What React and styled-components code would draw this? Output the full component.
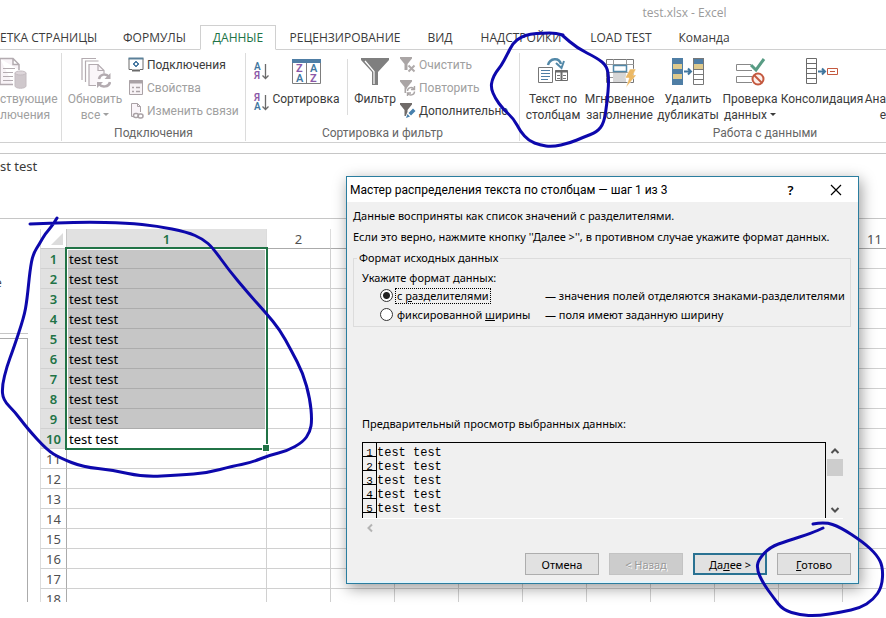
import React, { useState } from 'react';
import styled, { createGlobalStyle, css } from 'styled-components';

const tabs = [
  { name: 'ЕТКА СТРАНИЦЫ', width: 109, first: true },
  { name: 'ФОРМУЛЫ', width: 91 },
  { name: 'ДАННЫЕ', width: 76, active: true },
  { name: 'РЕЦЕНЗИРОВАНИЕ', width: 138 },
  { name: 'ВИД', width: 52 },
  { name: 'НАДСТРОЙКИ', width: 110 },
  { name: 'LOAD TEST', width: 90 },
  { name: 'Команда', width: 76 },
];

// Headings of the columns after the first, blank where the wizard covers them
const columns = ['2', '', '', '', '', '', '', '', '', '11'];
const rows = Array.from({ length: 18 }, (_, i) => i + 1);
const FILLED = 10;

// Freehand strokes drawn over the window
const strokes = [
  [[563, 35], [556, 33], [543, 33], [530, 34], [521, 37], [513, 43], [507, 55], [501, 66], [496, 72], [492, 80], [491, 88], [495, 98], [503, 109], [514, 119], [520, 131], [529, 141], [540, 145], [552, 147], [570, 143], [584, 137], [597, 132], [604, 123], [607, 103], [609, 80], [607, 66], [597, 58], [577, 48], [562, 35]],
  [[57, 218], [53, 225], [45, 234], [40, 243], [33, 254], [30, 270], [27, 300], [24, 317], [13, 350], [7, 366], [2, 386], [3, 400], [15, 412], [27, 428], [47, 450], [60, 458], [83, 467], [113, 470], [143, 477], [180, 475], [207, 473], [233, 466], [250, 463], [270, 455], [287, 451], [303, 442], [310, 432], [312, 420], [310, 399], [303, 373], [291, 350], [280, 330], [266, 313], [248, 293], [228, 269], [213, 248], [203, 239], [187, 232], [157, 226], [127, 223], [83, 222], [30, 224]],
  [[813, 524], [825, 522], [840, 527], [863, 542], [877, 555], [883, 567], [882, 587], [873, 600], [860, 608], [842, 612], [817, 616], [800, 615], [783, 610], [773, 597], [763, 583], [757, 570], [758, 560], [770, 547], [787, 541], [812, 533], [823, 528]],
];

const toPath = (points) => {
  let d = `M${points[0]}`;
  for (let i = 1; i < points.length - 1; i++) {
    const [x, y] = points[i];
    const [nx, ny] = points[i + 1];
    d += ` Q${x},${y} ${(x + nx) / 2},${(y + ny) / 2}`;
  }
  return `${d} L${points[points.length - 1]}`;
};

/* Icons */

function ExistingIcon() {
  return (
    <svg width='32' height='32' viewBox='0 0 32 32' fill='none' stroke='#b3abb0'>
      <path d='M5 1.5h13l6 6V13M5 1.5v26h13M18 1.5v6h6' fill='#f8f3f7' strokeWidth='1.5' />
      <path d='M8 11.5h12M8 15.5h10M8 19.5h10M8 23.5h10' />
      <path d='M20 16v13c0 3 11 3 11 0V16' fill='#cfc8cc' stroke='#c4bcc1' />
      <ellipse cx='25.5' cy='16' rx='5.5' ry='2' fill='#ddd6da' stroke='#c4bcc1' />
    </svg>
  );
}

function RefreshIcon() {
  return (
    <svg width='32' height='32' viewBox='0 0 32 32' fill='none' stroke='#b3abb0' strokeWidth='1.2'>
      <path d='M3 23V1.500h14M6.500 25V4h13' />
      <path d='M17 28.500h-7v-21h9l6 6v3' fill='#faf6f9' />
      <path d='M19 7.500v6h6' />
      <path d='M20 22c1-5 7-6 10-2M31 25c-1 5-8 6-11 2' strokeWidth='2.5' />
      <path d='M31.500 16v6h-6zM18 31v-6h6z' fill='#b3abb0' stroke='none' />
    </svg>
  );
}

function MonitorIcon() {
  return (
    <svg width='16' height='16' viewBox='0 0 16 16' fill='none' stroke='#6b6b6b'>
      <path d='M4 12.500H1v-11h14v11h-3' />
      <path d='M.500 1.500h15' stroke='#5b8099' strokeWidth='2' />
      <path d='M4 13.500h8' strokeWidth='2' />
      <path d='M8 4l3 3-3 3-3-3z' fill='#4f7ea5' stroke='#4f7ea5' />
      <path d='M7 6h2v2H7z' fill='#fff' stroke='none' />
    </svg>
  );
}

function PropsIcon() {
  return (
    <svg width='16' height='16' viewBox='0 0 16 16' fill='none' stroke='#aaa2a6'>
      <path d='M1.500 .500h13v14h-13z' fill='#f8f3f6' />
      <path d='M1 2h14' strokeWidth='3' />
      <path d='M4 7.500h2M4 11.500h2M8 7.500h4M8 11.500h4' strokeWidth='1.500' />
    </svg>
  );
}

function LinksIcon() {
  return (
    <svg width='16' height='16' viewBox='0 0 16 16' fill='none' stroke='#aaa2a6'>
      <path d='M5 13.500H3.500v-13h6l3 3V9' fill='#faf5f9' />
      <path d='M9.500.500v3h3' />
      <rect x='5.500' y='10.500' width='5' height='4' rx='2' strokeWidth='1.500' />
      <rect x='10' y='11' width='5' height='4' rx='2' strokeWidth='1.500' />
    </svg>
  );
}

function OrderIcon({ desc }) {
  return (
    <svg width='18' height='20' viewBox='0 0 18 20'>
      <IconText x='1' y='8' fill={desc ? '#8b58a8' : '#41779f'}>{desc ? 'Я' : 'А'}</IconText>
      <IconText x='1' y='17' fill={desc ? '#41779f' : '#8b58a8'}>{desc ? 'А' : 'Я'}</IconText>
      <path d='M12.500 2v14.500M9.500 13.500l3 3 3-3' fill='none' stroke='#6b6b6b' strokeWidth='1.300' />
    </svg>
  );
}

function SortIcon() {
  return (
    <svg width='32' height='32' viewBox='0 0 32 32' fill='none'>
      <path d='M2.500 3.500h28v23h-28zM16.500 5v21' fill='#fff' stroke='#7d7d7d' />
      <path d='M2 2h29v4H2z' fill='#4f7ea5' />
      <IconText x='6' y='15' $big fill='#8b58a8'>Z</IconText>
      <IconText x='6' y='25' $big fill='#41779f'>A</IconText>
      <IconText x='20' y='15' $big fill='#41779f'>A</IconText>
      <IconText x='20' y='25' $big fill='#8b58a8'>Z</IconText>
    </svg>
  );
}

function FilterIcon() {
  return (
    <svg width='32' height='32' viewBox='0 0 32 32'>
      <path d='M2 1h28v2L19 15v13h-6V15L2 3z' fill='#7f7f7f' />
      <path d='M6 4l9 10.500V27' fill='none' stroke='#fff' strokeWidth='1.200' />
    </svg>
  );
}

function SmallFilterIcon({ kind }) {
  return (
    <svg width='16' height='16' viewBox='0 0 16 16' fill='none'>
      <path d='M0 0h12v1.500L7.500 7v6h-3V7L0 1.500z' fill={kind === 'edit' ? '#6f6a68' : '#aaa5a5'} />
      {kind === 'clear' && <path d='M8.500 8.500l6 6M14.500 8.500l-6 6' stroke='#b0abab' strokeWidth='2' />}
      {kind === 'again' && (
        <>
          <circle cx='11' cy='11' r='5' fill='#fff' />
          <path d='M7.500 11c0-4 5-4.500 6.500-2M14.500 11.500c0 4-5 4.500-6.500 2M14.500 6v3.500H11M7.500 16v-3H11' stroke='#aaa5a5' strokeWidth='1.400' />
        </>
      )}
      {kind === 'edit' && (
        <>
          <path d='M5 15l2-5 6-6 3 3-6 6z' fill='#fff' />
          <path d='M6 15l1.500-4 2.500 2.500zM8.500 10l4.500-4.500 2.500 2.500-4.500 4.500z' fill='#4780ad' />
        </>
      )}
    </svg>
  );
}

function ColumnsIcon() {
  return (
    <svg width='32' height='32' viewBox='0 0 32 32' fill='none'>
      <path d='M1.500 10.500h14v15h-14z' fill='#fff' stroke='#777' />
      <path d='M4 13.500h9M4 16.500h9M4 19.500h9M4 22.500h7' stroke='#4f7ea5' />
      <path d='M18.500 13.500h12v10h-12z' fill='#fff' stroke='#6b6b6b' />
      <path d='M18 14.500h13M24.500 14v9' stroke='#6b6b6b' strokeWidth='2' />
      <path d='M20 18.500h3M20 21.500h3M26 18.500h3M26 21.500h3' stroke='#777' />
      <path d='M11 8c2-7 11-8 13-1' stroke='#5288a8' strokeWidth='2.5' />
      <path d='M19 6l5.500 5L27 4' stroke='#5288a8' strokeWidth='2' />
    </svg>
  );
}

function FlashIcon() {
  return (
    <svg width='32' height='32' viewBox='0 0 32 32' fill='none'>
      <path d='M2.500 2.500h27v23h-27z' fill='#fff' stroke='#777' />
      <path d='M9 16h13v9H9z' fill='#d6d6d6' />
      <path d='M2 7.500h28M2 15.500h28M2 20.500h7M9.500 2v6M22.500 2v6' stroke='#999' />
      <path d='M9.500 8.500h13v6h-13z' stroke='#5288a8' strokeWidth='1.500' fill='#fff' />
      <path d='M26 12h6l-3 6h3.500L22 30.500l3-9.500h-4z' fill='#ebb864' stroke='#fff' strokeWidth='.5' />
    </svg>
  );
}

function DuplicatesIcon() {
  return (
    <svg width='34' height='32' viewBox='0 0 34 32' fill='none'>
      <path d='M1 1h11v27H1zM22 1h11v6H22z' fill='#4f7ea5' />
      <path d='M2 7h9v5H2zM2 17h9v5H2zM22 7h11v5H22z' fill='#dfca8d' />
      <path d='M22.500 1.500h10v26h-10zM22 12.500h11M22 17.500h11M22 22.500h11' stroke='#777' />
      <path d='M13 14.500h6M17 11.500l3 3-3 3' stroke='#41779f' strokeWidth='2' />
    </svg>
  );
}

function ValidationIcon() {
  return (
    <svg width='32' height='32' viewBox='0 0 32 32' fill='none'>
      <path d='M17 7.500H2.500v6H18M18 19.500H2.500v6H18' stroke='#888' />
      <path d='M17 8l5 5 8-11' stroke='#589c84' strokeWidth='3' />
      <circle cx='24' cy='22' r='5.500' stroke='#c4593f' strokeWidth='2' fill='#fdf0ec' />
      <path d='M20 18l8 8' stroke='#c4593f' strokeWidth='2' />
    </svg>
  );
}

function ConsolidateIcon() {
  return (
    <svg width='34' height='32' viewBox='0 0 34 32' fill='none'>
      <path d='M1.500 1.500h10v25h-10zM1 6.500h11M1 11.500h11M1 16.500h11M1 21.500h11' stroke='#6b6b6b' />
      <path d='M13 14.500h6M17 11.500l3 3-3 3' stroke='#41779f' strokeWidth='2' />
      <path d='M22.500 11.500h10v6h-10zM25 14.500h5' stroke='#c4593f' />
    </svg>
  );
}

function Big({ icon, lines, width, muted, arrow }) {
  return (
    <BigButton type='button' $width={width} $muted={muted}>
      <BigIcon>{icon}</BigIcon>
      {lines.map((line, i) => (
        <span key={line}>
          {line}
          {arrow && i === lines.length - 1 && <Caret />}
        </span>
      ))}
    </BigButton>
  );
}

function Ribbon() {
  return (
    <RibbonBar>
      <Group $width={62}>
        <Items>
          <EdgeButton type='button'>
            <EdgeIcon><ExistingIcon /></EdgeIcon>
            <span>ствующие</span>
            <span>лючения</span>
          </EdgeButton>
        </Items>
      </Group>
      <Group $width={184}>
        <Items $pad={4}>
          <Big icon={<RefreshIcon />} lines={['Обновить', 'все']} width={58} muted arrow />
          <SmallList>
            <SmallButton type='button'><MonitorIcon />Подключения</SmallButton>
            <SmallButton type='button' $muted><PropsIcon />Свойства</SmallButton>
            <SmallButton type='button' $muted><LinksIcon />Изменить связи</SmallButton>
          </SmallList>
        </Items>
        <GroupLabel>Подключения</GroupLabel>
      </Group>
      <Group $width={274}>
        <Items $pad={7}>
          <OrderList>
            <OrderButton type='button' aria-label='По возрастанию'><OrderIcon /></OrderButton>
            <OrderButton type='button' aria-label='По убыванию'><OrderIcon desc /></OrderButton>
          </OrderList>
          <Big icon={<SortIcon />} lines={['Сортировка']} width={70} />
          <Divider />
          <Big icon={<FilterIcon />} lines={['Фильтр']} width={42} />
          <SmallList>
            <SmallButton type='button' $muted><SmallFilterIcon kind='clear' />Очистить</SmallButton>
            <SmallButton type='button' $muted><SmallFilterIcon kind='again' />Повторить</SmallButton>
            <SmallButton type='button'><SmallFilterIcon kind='edit' />Дополнительно</SmallButton>
          </SmallList>
        </Items>
        <GroupLabel>Сортировка и фильтр</GroupLabel>
      </Group>
      <Group $width={491}>
        <Items $pad={3}>
          <Big icon={<ColumnsIcon />} lines={['Текст по', 'столбцам']} width={60} />
          <Big icon={<FlashIcon />} lines={['Мгновенное', 'заполнение']} width={73} />
          <Big icon={<DuplicatesIcon />} lines={['Удалить', 'дубликаты']} width={64} />
          <Big icon={<ValidationIcon />} lines={['Проверка', 'данных']} width={60} arrow />
          <Big icon={<ConsolidateIcon />} lines={['Консолидация']} width={84} />
          <CutButton type='button'>
            <span>Ана</span>
            <span>е</span>
          </CutButton>
        </Items>
        <GroupLabel>Работа с данными</GroupLabel>
      </Group>
    </RibbonBar>
  );
}

function Sheet() {
  return (
    <SheetArea>
      <Grid>
        <colgroup>
          <FirstCol />
          <WideCol />
          {columns.map((c, i) => <Col key={i} />)}
        </colgroup>
        <thead>
          <tr>
            <Corner aria-label='Выделить все'>
              <svg width='12' height='12' viewBox='0 0 12 12'><path d='M12 0v12H0z' fill='#dcdcdc' /></svg>
            </Corner>
            <ColHead $selected>1</ColHead>
            {columns.map((c, i) => <ColHead key={i}>{c}</ColHead>)}
          </tr>
        </thead>
        <tbody>
          {rows.map((r) => (
            <tr key={r}>
              <RowHead $selected={r <= FILLED}>{r}</RowHead>
              <Cell $shaded={r < FILLED}>{r <= FILLED ? 'test test' : ''}</Cell>
              {columns.map((c, i) => <Cell key={i} />)}
            </tr>
          ))}
        </tbody>
      </Grid>
      <Selection><Handle /></Selection>
    </SheetArea>
  );
}

function Wizard() {
  const [format, setFormat] = useState('delimited');

  return (
    <Dialog role='dialog' aria-labelledby='wizard-title'>
      <DialogBar>
        <DialogTitle id='wizard-title'>Мастер распределения текста по столбцам — шаг 1 из 3</DialogTitle>
        <BarButton type='button'>?</BarButton>
        <BarButton type='button' aria-label='Закрыть'>
          <svg width='12' height='12' viewBox='0 0 12 12'><path d='M1 1l10 10M11 1L1 11' stroke='#000' strokeWidth='1.200' /></svg>
        </BarButton>
      </DialogBar>
      <DialogBody>
        <Line>Данные восприняты как список значений с разделителями.</Line>
        <Line>Если это верно, нажмите кнопку ''Далее &gt;'', в противном случае укажите формат данных.</Line>
        <Fieldset>
          <legend>Формат исходных данных</legend>
          <Prompt>Укажите формат данных:</Prompt>
          <Option>
            <Radio type='radio' id='delimited' name='format' checked={format === 'delimited'} onChange={() => setFormat('delimited')} />
            <OptionLabel htmlFor='delimited' $focused><span>с <u>р</u>азделителями</span></OptionLabel>
            <span>— значения полей отделяются знаками-разделителями</span>
          </Option>
          <Option>
            <Radio type='radio' id='fixed' name='format' checked={format === 'fixed'} onChange={() => setFormat('fixed')} />
            <OptionLabel htmlFor='fixed'><span>фиксированной <u>ш</u>ирины</span></OptionLabel>
            <span>— поля имеют заданную ширину</span>
          </Option>
        </Fieldset>
        <PreviewTitle>Предварительный просмотр выбранных данных:</PreviewTitle>
        <Preview>
          <PreviewBox>
            {[1, 2, 3, 4, 5].map((n) => (
              <PreviewRow key={n}>
                <PreviewNumber>{n}</PreviewNumber>
                test test
              </PreviewRow>
            ))}
            <PreviewEnd />
          </PreviewBox>
          <Scrollbar>
            <ScrollButton type='button' aria-label='Вверх'>
              <svg width='10' height='8' viewBox='0 0 10 8'><path d='M1.500 6L5 2.500 8.500 6' fill='none' stroke='#505050' strokeWidth='2' /></svg>
            </ScrollButton>
            <Thumb />
            <ScrollButton type='button' aria-label='Вниз'>
              <svg width='10' height='8' viewBox='0 0 10 8'><path d='M1.500 2L5 5.500 8.500 2' fill='none' stroke='#505050' strokeWidth='2' /></svg>
            </ScrollButton>
          </Scrollbar>
        </Preview>
        <SideScroll>
          <ScrollButton type='button' aria-label='Влево' disabled>
            <svg width='8' height='10' viewBox='0 0 8 10'><path d='M6 1.500L2.500 5 6 8.500' fill='none' stroke='#b4b4b4' strokeWidth='2' /></svg>
          </ScrollButton>
        </SideScroll>
        <Actions>
          <Action type='button'>Отмена</Action>
          <Action type='button' disabled>&lt; Назад</Action>
          <Action type='button' $primary><span>Да<u>л</u>ее &gt;</span></Action>
          <Action type='button'><span><u>Г</u>отово</span></Action>
        </Actions>
      </DialogBody>
    </Dialog>
  );
}

function App() {
  return (
    <Window>
      <GlobalStyle />
      <TitleBar>test.xlsx - Excel</TitleBar>
      <Tabs>
        {tabs.map((tab) => (
          <Tab key={tab.name} href='#' $width={tab.width} $active={tab.active} $first={tab.first}>
            {tab.name}
          </Tab>
        ))}
      </Tabs>
      <Ribbon />
      <FormulaBar>st test</FormulaBar>
      <Workspace>
        <SidePane>
          <PaneTop>е</PaneTop>
          <PaneBox />
        </SidePane>
        <Sheet />
      </Workspace>
      <Wizard />
      <Ink viewBox='0 0 886 618' aria-hidden='true'>
        {strokes.map((points, i) => <path key={i} d={toPath(points)} />)}
      </Ink>
    </Window>
  );
}

export default App;

// Styled Components
const GlobalStyle = createGlobalStyle`
  * {
    box-sizing: border-box;
  }
  body {
    margin: 0;
    background: #fff;
    font-family: 'Open Sans', 'Noto Sans', sans-serif;
    font-size: 12px;
    color: #3b3b3b;
    overflow: hidden;
  }
  button {
    font: inherit;
    color: inherit;
    background: none;
    border: 0;
    padding: 0;
  }
`;

const Window = styled.div`
  position: relative;
  min-height: 100vh;
  overflow: hidden;
`;

const TitleBar = styled.header`
  height: 25px;
  padding-left: 483px;
  line-height: 26px;
  text-align: center;
  color: #9b9b9b;
`;

const Tabs = styled.nav`
  display: flex;
  height: 25px;
  border-bottom: 1px solid #d0d0d0;
`;

const Tab = styled.a`
  flex: none;
  width: ${(p) => p.$width}px;
  height: 25px;
  line-height: 26px;
  text-align: ${(p) => (p.$first ? 'left' : 'center')};
  white-space: nowrap;
  text-decoration: none;
  color: #3b3b3b;
  ${(p) => p.$active && css`
    line-height: 24px;
    border: 1px solid #d0d0d0;
    border-bottom-color: #fff;
    color: #217346;
  `}
`;

const RibbonBar = styled.div`
  display: flex;
  height: 93px;
  border-bottom: 1px solid #d0d0d0;
  overflow: hidden;
  font-family: Roboto, 'Open Sans', sans-serif;
`;

const Group = styled.section`
  flex: none;
  display: flex;
  flex-direction: column;
  width: ${(p) => p.$width}px;
  margin: 3px 0 1px;
  border-right: 1px solid #dcdcdc;
`;

const Items = styled.div`
  flex: 1;
  display: flex;
  padding-left: ${(p) => p.$pad || 0}px;
`;

const GroupLabel = styled.div`
  height: 15px;
  line-height: 15px;
  text-align: center;
  color: #666;
`;

const BigButton = styled.button`
  flex: none;
  display: flex;
  flex-direction: column;
  align-items: center;
  width: ${(p) => p.$width}px;
  line-height: 16px;
  white-space: nowrap;
  color: ${(p) => (p.$muted ? '#a0a0a0' : '#3b3b3b')};
`;

const BigIcon = styled.span`
  height: 38px;
  padding-top: 4px;
`;

const EdgeButton = styled(BigButton)`
  align-items: flex-start;
  width: 61px;
  overflow: hidden;
  color: #a0a0a0;
`;

const EdgeIcon = styled(BigIcon)`
  margin-left: -5px;
`;

const CutButton = styled(BigButton)`
  align-items: flex-end;
  width: 22px;
  padding-top: 38px;
`;

const Caret = styled.i`
  display: inline-block;
  margin: 0 0 3px 3px;
  border: 3px solid transparent;
  border-top-color: currentColor;
  border-bottom: 0;
`;

const SmallList = styled.div`
  display: flex;
  flex-direction: column;
  margin-left: 4px;
`;

const SmallButton = styled.button`
  display: flex;
  align-items: center;
  gap: 3px;
  height: 23px;
  white-space: nowrap;
  color: ${(p) => (p.$muted ? '#a0a0a0' : '#3b3b3b')};
`;

const OrderList = styled.div`
  display: flex;
  flex-direction: column;
  gap: 11px;
  padding-top: 9px;
`;

const OrderButton = styled.button`
  height: 20px;
`;

const IconText = styled.text`
  font-family: Roboto, sans-serif;
  font-size: ${(p) => (p.$big ? 11 : 10)}px;
  font-weight: 600;
`;

const Divider = styled.div`
  width: 1px;
  height: 56px;
  margin: 6px 6px 0;
  background: #dcdcdc;
`;

const FormulaBar = styled.div`
  height: 66px;
  margin-top: 10px;
  border-top: 1px solid #c6c6c6;
  border-bottom: 1px solid #c6c6c6;
  line-height: 25px;
  font-family: 'Noto Sans', sans-serif;
  font-size: 13px;
`;

const Workspace = styled.main`
  display: flex;
  height: calc(100vh - 235px);
  overflow: hidden;
`;

const SidePane = styled.aside`
  flex: none;
  display: flex;
  flex-direction: column;
  gap: 4px;
  width: 28px;
  margin-right: 12px;
`;

const PaneTop = styled.div`
  height: 115px;
  padding-top: 55px;
  border-bottom: 1px solid #c6c6c6;
  text-indent: -5px;
`;

const PaneBox = styled.div`
  flex: 1;
  border: 1px solid #ababab;
  border-width: 1px 1px 0 0;
`;

const SheetArea = styled.div`
  position: relative;
  flex: 1;
  margin-top: 10px;
  overflow: hidden;
`;

const Grid = styled.table`
  width: 867px;
  table-layout: fixed;
  border-collapse: separate;
  border-spacing: 0;
  font-family: 'Noto Sans', sans-serif;
  font-size: 13px;
`;

const Col = styled.col`
  width: 64px;
`;

const FirstCol = styled(Col)`
  width: 27px;
`;

const WideCol = styled(Col)`
  width: 200px;
`;

const HeadCell = styled.th`
  height: 20px;
  padding: 1px 0 0;
  line-height: 18px;
  font-weight: 400;
  color: #505050;
`;

const Corner = styled(HeadCell)`
  border-left: 1px solid #dcdcdc;
  border-right: 1px solid #c6c6c6;
  border-bottom: 1px solid #c6c6c6;
  padding-right: 3px;

  svg {
    display: block;
    margin-left: auto;
  }
`;

const ColHead = styled(HeadCell)`
  border-right: 1px solid #dcdcdc;
  border-bottom: 1px solid #ababab;
  ${(p) => p.$selected && css`
    background: #e1e1e1;
    color: #217346;
    font-weight: 600;
  `}
`;

const RowHead = styled(HeadCell)`
  border-left: 1px solid #dcdcdc;
  border-right: 1px solid #ababab;
  border-bottom: 1px solid #d0d0d0;
  ${(p) => p.$selected && css`
    background: #e1e1e1;
    color: #217346;
    font-weight: 600;
  `}
`;

const Cell = styled.td`
  height: 20px;
  padding: 1px 0 0 2px;
  border-right: 1px solid #d0d0d0;
  border-bottom: 1px solid ${(p) => (p.$shaded ? '#acacac' : '#d0d0d0')};
  background: ${(p) => (p.$shaded ? '#c6c6c6' : '#fff')};
  line-height: 18px;
  color: #000;
`;

// Frame around the selected range
const Selection = styled.div`
  position: absolute;
  top: 18px;
  left: 25px;
  width: 203px;
  height: 203px;
  border: 2px solid #217346;
  box-shadow: inset 0 0 0 1px #fff;
`;

const Handle = styled.span`
  position: absolute;
  right: -3px;
  bottom: -3px;
  width: 6px;
  height: 6px;
  background: #217346;
  outline: 1px solid #fff;
`;

const Dialog = styled.div`
  position: absolute;
  top: 176px;
  left: 346px;
  width: 513px;
  border: 1px solid #2a7d9f;
  background: #f0f0f0;
  box-shadow: 2px 4px 14px rgba(0, 0, 0, 0.4);
  color: #000;
  font-family: 'Noto Sans', sans-serif;
  font-size: 11px;
`;

const DialogBar = styled.div`
  display: flex;
  align-items: center;
  height: 25px;
  padding-left: 3px;
  background: #fff;
`;

const DialogTitle = styled.h1`
  flex: 1;
  margin: 0;
  font-family: Roboto, sans-serif;
  font-size: 12px;
  font-weight: 400;
  line-height: 24px;
  white-space: nowrap;
`;

const BarButton = styled.button`
  display: flex;
  align-items: center;
  justify-content: center;
  width: 45px;
  height: 24px;
  font-size: 13px;
  font-weight: 600;
`;

const DialogBody = styled.div`
  padding: 3px 7px 8px 6px;
  box-shadow: inset 0 -2px 0 #e2f4fb;
`;

const Line = styled.p`
  margin: 0;
  line-height: 21px;
  white-space: nowrap;
`;

const Fieldset = styled.fieldset`
  height: 76px;
  margin: 4px 0 0;
  padding: 5px 0 0 8px;
  border: 1px solid #dcdcdc;

  legend {
    padding: 0 2px;
    margin-left: -5px;
    line-height: 14px;
  }
`;

const Prompt = styled.div`
  line-height: 16px;
`;

const Option = styled.div`
  display: flex;
  align-items: center;
  height: 19px;
  padding-left: 18px;
  white-space: nowrap;
`;

const Radio = styled.input`
  appearance: none;
  width: 13px;
  height: 13px;
  margin: 0 2px 0 0;
  border: 1px solid #333;
  border-radius: 50%;
  background: #fff;

  &:checked {
    background: radial-gradient(circle, #222 3px, #fff 4px);
  }
`;

const OptionLabel = styled.label`
  width: 150px;

  span {
    display: inline-block;
    padding: 0 1px;
    line-height: 14px;
    border: 1px dotted ${(p) => (p.$focused ? '#000' : 'transparent')};
  }
`;

const PreviewTitle = styled.div`
  margin: 88px 0 9px 9px;
  line-height: 18px;
`;

const Preview = styled.div`
  display: flex;
  height: 77px;
  margin: 0 8px 0 9px;
  border-bottom: 1px solid #fff;
`;

const PreviewBox = styled.div`
  flex: 1;
  display: flex;
  flex-direction: column;
  border: 1px solid #000;
  border-bottom: 0;
  font-family: 'Liberation Mono', monospace;
  font-size: 12px;
`;

const PreviewRow = styled.div`
  display: flex;
  height: 14px;
  line-height: 20px;
`;

const PreviewNumber = styled.span`
  width: 14px;
  border-right: 1px solid #000;
  border-bottom: 1px solid #000;
  text-align: center;
  font-size: 11px;
`;

const PreviewEnd = styled.span`
  flex: 1;
  width: 14px;
  border-right: 1px solid #000;
`;

const Scrollbar = styled.div`
  display: flex;
  flex-direction: column;
  width: 17px;
  padding-left: 1px;
`;

const ScrollButton = styled.button`
  display: flex;
  align-items: center;
  justify-content: center;
  width: 16px;
  height: 17px;

  &:last-child {
    margin-top: auto;
  }
`;

const Thumb = styled.div`
  height: 17px;
  background: #cdcdcd;
`;

const SideScroll = styled.div`
  height: 34px;
  margin-left: 9px;
`;

const Actions = styled.div`
  display: flex;
  justify-content: flex-end;
  gap: 10px;
`;

const Action = styled.button`
  width: 74px;
  height: 22px;
  border: 1px solid #adadad;
  background: #e1e1e1;

  ${(p) => p.$primary && css`
    border: 2px solid #2a7292;
  `}

  &:disabled {
    border-color: #c3c3c3;
    background: #cccccc;
    color: #999;
    text-shadow: 1px 1px 0 #fff;
  }
`;

const Ink = styled.svg`
  position: absolute;
  top: 0;
  left: 0;
  width: 886px;
  height: 618px;
  pointer-events: none;
  fill: none;
  stroke: #0d08ac;
  stroke-width: 3;
  stroke-linecap: round;
  stroke-linejoin: round;
`;
